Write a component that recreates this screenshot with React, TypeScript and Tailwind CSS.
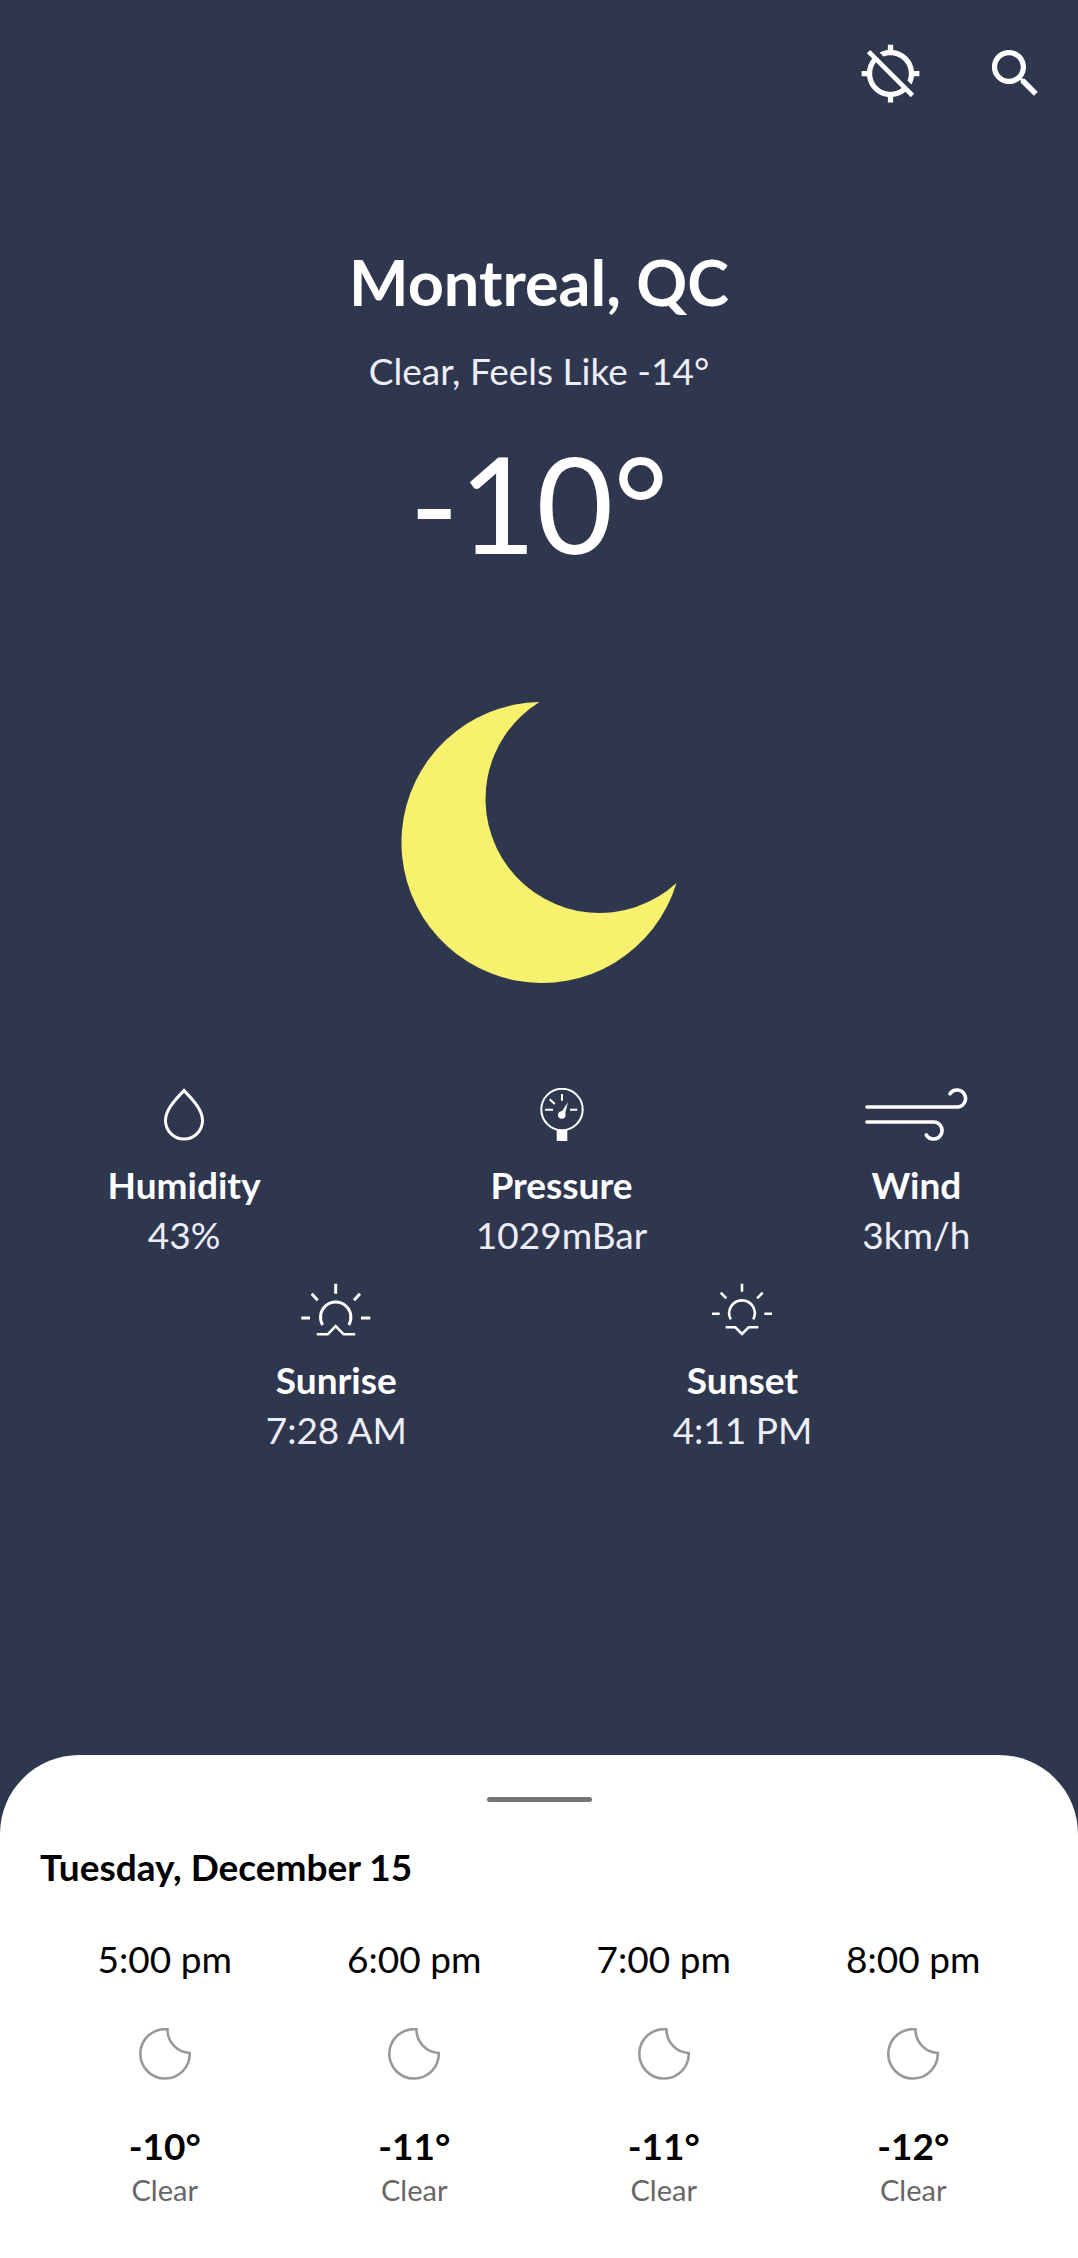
import type { ReactNode } from "react";
import { MdLocationDisabled, MdSearch } from "react-icons/md";

function MoonLarge() {
  return (
    <svg className="h-[281px] w-[276px]" viewBox="0 0 276 281" role="img" aria-label="Clear night">
      <path d="M138.500 0A140.500 140.500 0 1 0 275.500 181A114 114 0 1 1 138.500 0Z" fill="#f7f16d" />
    </svg>
  );
}

function DropIcon() {
  return (
    <svg className="h-[53px] w-[42px]" viewBox="0 0 42 53" fill="none" stroke="currentColor" strokeWidth="3" aria-hidden="true">
      <path d="M21 2.5C14 10 2.5 21 2.5 32.5a18.5 18.5 0 0 0 37 0C39.5 21 28 10 21 2.5Z" />
    </svg>
  );
}

function GaugeIcon() {
  return (
    <svg className="h-[53px] w-[44px]" viewBox="0 0 44 53" fill="none" stroke="currentColor" strokeWidth="2" aria-hidden="true">
      <circle cx="22" cy="21.5" r="20.7" />
      <path d="M22 6v6.7M5 21.7h8M30 21.7h7.3M9.7 11.3l5 4.7" />
      <path d="M28 14.3L20.4 25.5L24.6 27.6Z" fill="currentColor" stroke="none" />
      <circle cx="21.8" cy="27" r="3.8" fill="currentColor" stroke="none" />
      <path d="M16.7 42h10.6v11H16.7z" fill="currentColor" stroke="none" />
    </svg>
  );
}

function WindIcon() {
  return (
    <svg className="h-[53px] w-[104px]" viewBox="0 0 104 53" fill="none" stroke="currentColor" strokeWidth="3.6" strokeLinecap="round" aria-hidden="true">
      <path d="M3 19H93A8.5 8.5 0 1 0 86 5.7" />
      <path d="M3 34H69.5A8.5 8.5 0 1 1 62.3 47" />
    </svg>
  );
}

function SunriseIcon() {
  return (
    <svg className="h-[53px] w-[70px]" viewBox="0 0 70 53" fill="none" stroke="currentColor" strokeWidth="3" aria-hidden="true">
      <path d="M34.7 0.7v10M0.3 35h8.7M60 35h9.3M10.7 10.7l6 6.6M59 10.7l-6 6.6" />
      <path d="M21.6 42A15.2 15.2 0 1 1 47.8 42" />
      <path d="M15.7 51.3h11l8-8.3l8 8.3h11.5" strokeWidth="2.6" />
    </svg>
  );
}

function SunsetIcon() {
  return (
    <svg className="h-[53px] w-[62px]" viewBox="0 0 62 53" fill="none" stroke="currentColor" strokeWidth="2.6" aria-hidden="true">
      <path d="M31 0.7v8M1 30.7h7.7M53.3 30.7h7.7M9.7 9.7l5.6 5.6M51.7 9.7l-5.6 5.6" />
      <path d="M19.8 36.4A12.8 12.8 0 1 1 42.2 36.4" />
      <path d="M14.7 44.3h9.6l6.7 6.7l6.7-6.7h9.6" />
    </svg>
  );
}

function MoonOutline() {
  return (
    <svg className="h-[52px] w-[52px]" viewBox="0 0 52 52" fill="none" stroke="#999999" strokeWidth="2.6" aria-label="Clear night" role="img">
      <path d="M28.5 1.3A24.7 24.7 0 1 0 50.7 25A23.5 23.5 0 0 1 28.5 1.3Z" />
    </svg>
  );
}

function Metric({ icon, label, value }: { icon: ReactNode; label: string; value: string }) {
  return (
    <div className="flex flex-col items-center text-[37px] leading-[50px]">
      {icon}
      <dt className="mt-[19px] font-bold">{label}</dt>
      <dd className="text-[#eeeef8]">{value}</dd>
    </div>
  );
}

const hours = [
  { time: "5:00 pm", temp: "-10°", sky: "Clear" },
  { time: "6:00 pm", temp: "-11°", sky: "Clear" },
  { time: "7:00 pm", temp: "-11°", sky: "Clear" },
  { time: "8:00 pm", temp: "-12°", sky: "Clear" },
];

export default function App() {
  return (
    <div className="flex min-h-screen flex-col bg-[#2f374f] font-['Lato',sans-serif] text-white">
      <header className="flex justify-end gap-[62px] pt-[42px] pr-[31px]">
        <button type="button" aria-label="Location off">
          <MdLocationDisabled className="size-[63px]" />
        </button>
        <button type="button" aria-label="Search">
          <MdSearch className="size-[63px]" />
        </button>
      </header>

      <main className="flex flex-1 flex-col items-center pt-[133px] pb-16">
        <h1 className="text-[63px] leading-[88px] font-bold">Montreal, QC</h1>
        <p className="mt-5 text-[37px] leading-[50px] text-[#eeeef8]">Clear, Feels Like -14°</p>
        <p className="mt-[18px] text-[133px] leading-[178px]">-10°</p>
        <div className="mt-[110px]">
          <MoonLarge />
        </div>
        <dl className="mt-[105px] flex w-full justify-around">
          <Metric icon={<DropIcon />} label="Humidity" value="43%" />
          <Metric icon={<GaugeIcon />} label="Pressure" value="1029mBar" />
          <Metric icon={<WindIcon />} label="Wind" value="3km/h" />
        </dl>
        <dl className="mt-[23px] flex w-full justify-evenly">
          <Metric icon={<SunriseIcon />} label="Sunrise" value="7:28 AM" />
          <Metric icon={<SunsetIcon />} label="Sunset" value="4:11 PM" />
        </dl>
      </main>

      <section className="rounded-t-[79px] bg-white px-10 pt-[42px] pb-[49px] text-black">
        <div className="mx-auto h-[5px] w-[105px] rounded-full bg-[#757575]" />
        <h2 className="mt-10 text-[37px] leading-[50px] font-bold">Tuesday, December 15</h2>
        <ul className="mt-[42px] grid grid-cols-4">
          {hours.map((h) => (
            <li key={h.time} className="flex flex-col items-center">
              <span className="mb-11 text-[37px] leading-[50px]">{h.time}</span>
              <MoonOutline />
              <span className="mt-[41px] text-[37px] leading-[50px] font-bold">{h.temp}</span>
              <span className="text-[29px] leading-[38px] text-[#666666]">{h.sky}</span>
            </li>
          ))}
        </ul>
      </section>
    </div>
  );
}
